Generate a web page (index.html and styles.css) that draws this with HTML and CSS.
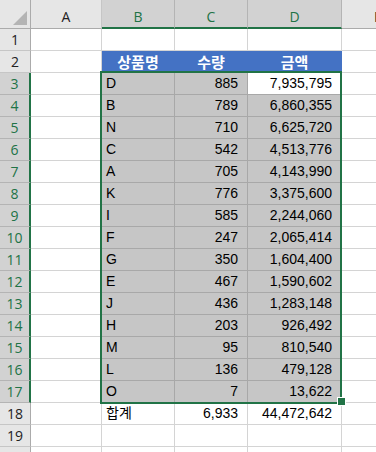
FILE: index.html
```html
<!DOCTYPE html>
<html lang="ko">
<head>
<meta charset="utf-8">
<title>Sheet</title>
<link rel="stylesheet" href="styles.css">
</head>
<body>
<div class="sheet">
  <div class="corner"><span class="tri"></span></div>
  <div class="ch">A</div>
  <div class="ch sel">B</div>
  <div class="ch sel">C</div>
  <div class="ch sel">D</div>
  <div class="ch">E</div>

  <div class="rh">1</div><div class="c"></div><div class="c"></div><div class="c"></div><div class="c"></div><div class="c"></div>
  <div class="rh">2</div><div class="c"></div><div class="c hd">상품명</div><div class="c hd">수량</div><div class="c hd">금액</div><div class="c"></div>

  <div class="rh sel">3</div><div class="c"></div><div class="c s">D</div><div class="c s num">885</div><div class="c s num act">7,935,795</div><div class="c"></div>
  <div class="rh sel">4</div><div class="c"></div><div class="c s">B</div><div class="c s num">789</div><div class="c s num">6,860,355</div><div class="c"></div>
  <div class="rh sel">5</div><div class="c"></div><div class="c s">N</div><div class="c s num">710</div><div class="c s num">6,625,720</div><div class="c"></div>
  <div class="rh sel">6</div><div class="c"></div><div class="c s">C</div><div class="c s num">542</div><div class="c s num">4,513,776</div><div class="c"></div>
  <div class="rh sel">7</div><div class="c"></div><div class="c s">A</div><div class="c s num">705</div><div class="c s num">4,143,990</div><div class="c"></div>
  <div class="rh sel">8</div><div class="c"></div><div class="c s">K</div><div class="c s num">776</div><div class="c s num">3,375,600</div><div class="c"></div>
  <div class="rh sel">9</div><div class="c"></div><div class="c s">I</div><div class="c s num">585</div><div class="c s num">2,244,060</div><div class="c"></div>
  <div class="rh sel">10</div><div class="c"></div><div class="c s">F</div><div class="c s num">247</div><div class="c s num">2,065,414</div><div class="c"></div>
  <div class="rh sel">11</div><div class="c"></div><div class="c s">G</div><div class="c s num">350</div><div class="c s num">1,604,400</div><div class="c"></div>
  <div class="rh sel">12</div><div class="c"></div><div class="c s">E</div><div class="c s num">467</div><div class="c s num">1,590,602</div><div class="c"></div>
  <div class="rh sel">13</div><div class="c"></div><div class="c s">J</div><div class="c s num">436</div><div class="c s num">1,283,148</div><div class="c"></div>
  <div class="rh sel">14</div><div class="c"></div><div class="c s">H</div><div class="c s num">203</div><div class="c s num">926,492</div><div class="c"></div>
  <div class="rh sel">15</div><div class="c"></div><div class="c s">M</div><div class="c s num">95</div><div class="c s num">810,540</div><div class="c"></div>
  <div class="rh sel">16</div><div class="c"></div><div class="c s">L</div><div class="c s num">136</div><div class="c s num">479,128</div><div class="c"></div>
  <div class="rh sel">17</div><div class="c"></div><div class="c s">O</div><div class="c s num">7</div><div class="c s num">13,622</div><div class="c"></div>

  <div class="rh">18</div><div class="c"></div><div class="c">합계</div><div class="c num">6,933</div><div class="c num">44,472,642</div><div class="c"></div>
  <div class="rh">19</div><div class="c"></div><div class="c"></div><div class="c"></div><div class="c"></div><div class="c"></div>
  <div class="rh"></div><div class="c"></div><div class="c"></div><div class="c"></div><div class="c"></div><div class="c"></div>

  <div class="selection"></div>
  <div class="handle"></div>
</div>
</body>
</html>
```

FILE: styles.css
```css
html, body {
  margin: 0;
  padding: 0;
  background: #ffffff;
  overflow: hidden;
}

.sheet {
  position: relative;
  display: grid;
  grid-template-columns: 31px 71px 73px 73px 94px 73px;
  grid-template-rows: 29px;
  grid-auto-rows: 22px;
  width: max-content;
  font-family: "Liberation Sans", "Noto Sans CJK KR", sans-serif;
  font-size: 14px;
  color: #000;
}

.sheet > div {
  box-sizing: border-box;
  overflow: hidden;
  white-space: nowrap;
}

.corner {
  position: relative;
  background: #e6e6e6;
  border-right: 1px solid #ababab;
  border-bottom: 1px solid #ababab;
}

.tri {
  position: absolute;
  right: 3px;
  bottom: 3px;
  width: 0;
  height: 0;
  border-left: 14px solid transparent;
  border-bottom: 14px solid #b4b4b4;
}

.ch {
  background: #e6e6e6;
  border-right: 1px solid #c6c6c6;
  border-bottom: 1px solid #ababab;
  font-family: "Open Sans", sans-serif;
  font-size: 14px;
  color: #222;
  text-align: center;
  padding-top: 6px;
  line-height: 21px;
}

.ch.sel {
  background: #d2d2d2;
  color: #217346;
  border-bottom: 2px solid #217346;
  border-right-color: #b4b4b4;
}

.rh {
  background: #e6e6e6;
  border-right: 1px solid #ababab;
  border-bottom: 1px solid #c6c6c6;
  font-family: "Open Sans", sans-serif;
  font-size: 14px;
  color: #222;
  text-align: center;
  line-height: 21px;
}

.rh.sel {
  background: #d2d2d2;
  color: #217346;
  border-right: 2px solid #217346;
  border-bottom-color: #b4b4b4;
}

.c {
  background: #ffffff;
  border-right: 1px solid #d4d4d4;
  border-bottom: 1px solid #d4d4d4;
  padding: 0 4px;
  line-height: 20px;
}

.c.num {
  text-align: right;
  padding-right: 9px;
}

.c.s {
  background: #c6c6c6;
  border-right-color: #a8a8a8;
  border-bottom-color: #a8a8a8;
}

.c.s.act {
  background: #ffffff;
}

.c.hd {
  background: #4472c4;
  border-right-color: #4472c4;
  border-bottom-color: #4472c4;
  color: #ffffff;
  font-family: "Noto Sans CJK KR", sans-serif;
  font-weight: 700;
  font-size: 15px;
  text-align: center;
  line-height: 21px;
}

.selection {
  position: absolute;
  left: 100px;
  top: 71px;
  width: 242px;
  height: 333px;
  box-sizing: border-box;
  border: 2px solid #217346;
  pointer-events: none;
}

.handle {
  position: absolute;
  left: 338px;
  top: 398px;
  width: 7px;
  height: 7px;
  box-sizing: border-box;
  background: #217346;
  outline: 1px solid #ffffff;
}
```
